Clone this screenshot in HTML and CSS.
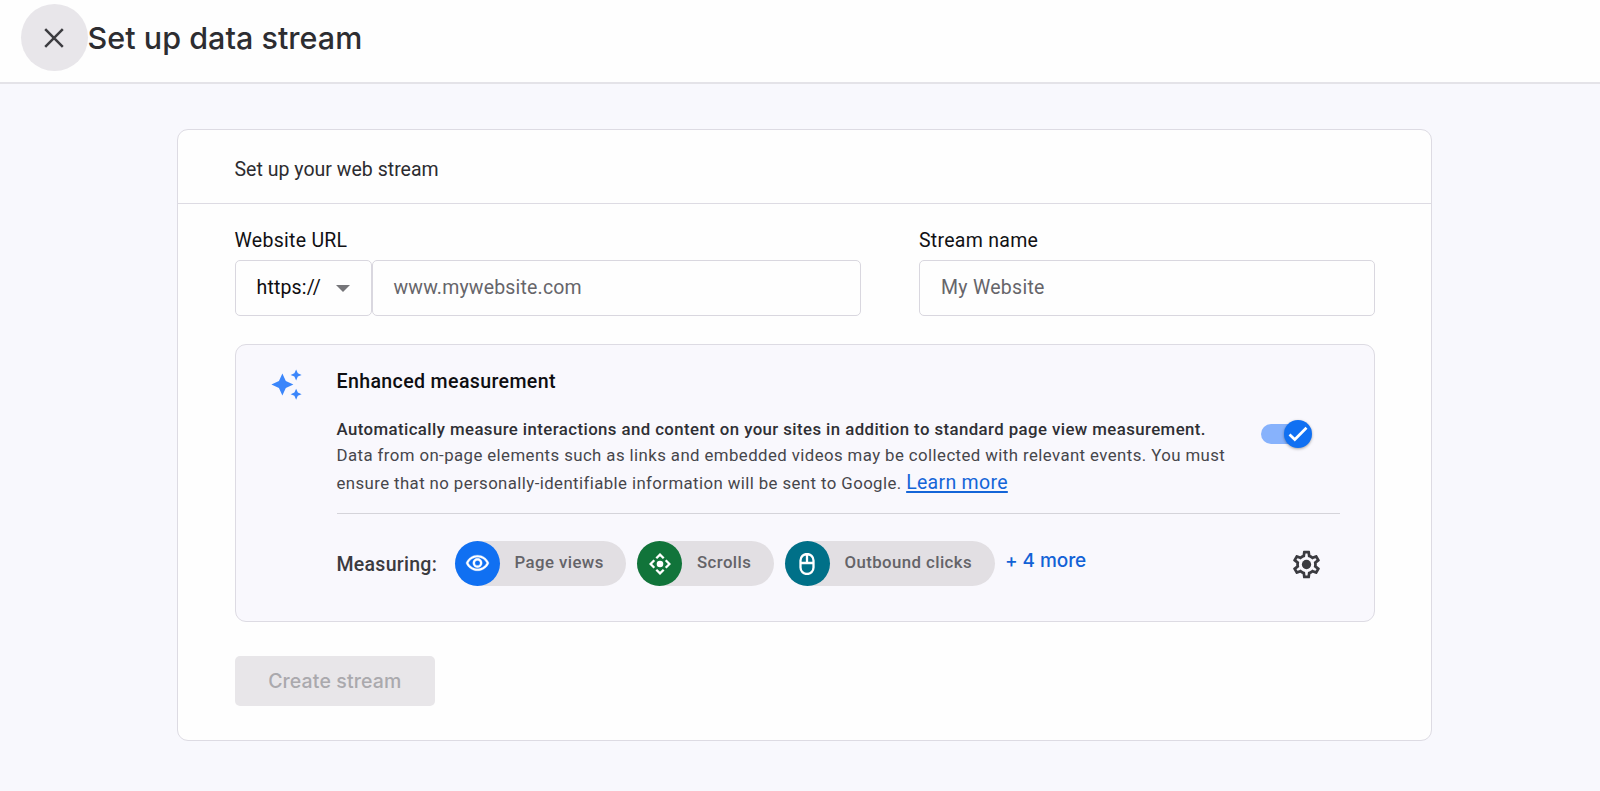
FILE: index.html
```
<!DOCTYPE html>
<html lang="en">
<head>
<meta charset="utf-8">
<title>Set up data stream</title>
<link rel="stylesheet" href="styles.css">
</head>
<body>
<header class="topbar">
  <button class="close" aria-label="Close">
    <svg viewBox="0 0 20 20" width="20" height="20"><path d="M1.2 1.2 18.8 18.8M18.8 1.2 1.2 18.8" fill="none" stroke="#3c3c40" stroke-width="2.5"/></svg>
  </button>
  <h1 class="title">Set up data stream</h1>
</header>
<main class="page">
  <section class="card">
    <div class="card-head">Set up your web stream</div>
    <div class="card-body">
      <div class="fields">
        <div class="field field-url">
          <label class="label">Website URL</label>
          <div class="url-row">
            <div class="box select"><span>https://</span><svg class="caret" viewBox="0 0 14 7" width="14" height="7"><path d="M0 0h14L7 7z" fill="#757579"/></svg></div>
            <div class="box input url">www.mywebsite.com</div>
          </div>
        </div>
        <div class="field field-name">
          <label class="label name-label">Stream name</label>
          <div class="box input name">My Website</div>
        </div>
      </div>
      <section class="enhanced">
        <svg class="sparkle" viewBox="0 0 24 24" width="33" height="33" fill="#3b86fb"><path d="M19 9l1.25-2.75L23 5l-2.75-1.25L19 1l-1.25 2.75L15 5l2.75 1.25L19 9zM11.5 9.5 9 4 6.500 9.500 1 12l5.500 2.500L9 20l2.500-5.500L17 12l-5.500-2.500zM19 15l-1.250 2.750L15 19l2.750 1.250L19 23l1.250-2.750L23 19l-2.750-1.250L19 15z"/></svg>
        <div class="enhanced-main">
          <h2 class="enhanced-title">Enhanced measurement</h2>
          <div class="desc-row">
            <div class="desc">
              <p class="line strong">Automatically measure interactions and content on your sites in addition to standard page view measurement.</p>
              <p class="line">Data from on-page elements such as links and embedded videos may be collected with relevant events. You must</p>
              <p class="line last">ensure that no personally-identifiable information will be sent to Google. <a class="link">Learn more</a></p>
            </div>
            <div class="toggle"><span class="knob"><svg viewBox="0 0 20 16" width="20" height="16"><path d="M1.500 8.500 6.800 13.500 18.500 1.800" fill="none" stroke="#fff" stroke-width="2.700"/></svg></span></div>
          </div>
          <div class="measuring">
            <span class="measuring-label">Measuring:</span>
            <div class="chips">
              <div class="chip views"><span class="dot blue"><svg viewBox="0 0 24 24" width="25" height="25"><path fill="#fff" stroke="#fff" stroke-width=".3" d="M12 6c3.790 0 7.170 2.130 8.820 5.500C19.170 14.870 15.790 17 12 17s-7.170-2.130-8.820-5.500C4.830 8.130 8.210 6 12 6m0-2C7 4 2.730 7.110 1 11.500 2.730 15.890 7 19 12 19s9.270-3.110 11-7.500C21.270 7.110 17 4 12 4zm0 5a2.500 2.500 0 0 1 0 5 2.500 2.500 0 0 1 0-5m0-2c-2.480 0-4.500 2.020-4.500 4.500S9.520 16 12 16s4.500-2.020 4.500-4.500S14.480 7 12 7z"/></svg></span><span class="chip-text">Page views</span></div>
              <div class="chip scrolls"><span class="dot green"><svg viewBox="0 0 22 22" width="22" height="22"><circle cx="11" cy="11" r="3.300" fill="#fff"/><path d="M7.300 5.300 11 1.600l3.700 3.700M16.700 7.300l3.700 3.700-3.700 3.700M14.700 16.700 11 20.400l-3.700-3.700M5.300 14.700 1.600 11l3.700-3.700" fill="none" stroke="#fff" stroke-width="2.300"/></svg></span><span class="chip-text">Scrolls</span></div>
              <div class="chip clicks"><span class="dot teal"><svg viewBox="0 0 16 22" width="16" height="22"><path d="M1.500 7.500a6.500 6.500 0 0 1 13 0v7a6.500 6.500 0 0 1-13 0zM1.500 10h13M8 1v9" fill="none" stroke="#fff" stroke-width="2.300"/></svg></span><span class="chip-text">Outbound clicks</span></div>
            </div>
            <a class="more">+ 4 more</a>
            <svg class="gear" viewBox="0 0 24 24" width="33" height="33" fill="#3b3b40"><path d="M19.430 12.980c.04-.32.07-.64.07-.98 0-.34-.03-.66-.07-.98l2.110-1.650c.19-.15.24-.42.12-.64l-2-3.460c-.09-.16-.26-.25-.44-.25-.06 0-.12.01-.17.03l-2.490 1c-.52-.4-1.080-.73-1.690-.98l-.38-2.650C14.460 2.180 14.250 2 14 2h-4c-.25 0-.46.18-.49.42l-.38 2.650c-.61.25-1.170.59-1.690.98l-2.490-1c-.06-.02-.12-.03-.18-.03-.17 0-.34.09-.43.25l-2 3.460c-.13.22-.07.49.12.64l2.110 1.650c-.04.32-.07.65-.07.98 0 .33.03.66.07.98l-2.110 1.650c-.19.15-.24.42-.12.64l2 3.460c.09.16.26.25.44.25.06 0 .12-.01.17-.03l2.490-1c.52.4 1.080.73 1.690.98l.38 2.650c.03.24.24.42.49.42h4c.25 0 .46-.18.49-.42l.38-2.650c.61-.25 1.170-.59 1.690-.98l2.490 1c.06.02.12.03.18.03.17 0 .34-.09.43-.25l2-3.460c.12-.22.07-.49-.12-.64l-2.110-1.650zm-1.980-1.710c.04.31.05.52.05.73 0 .21-.02.43-.05.73l-.14 1.130.89.7 1.080.84-.7 1.210-1.270-.51-1.040-.42-.9.68c-.43.32-.84.56-1.250.73l-1.060.43-.16 1.130-.2 1.350h-1.400l-.19-1.350-.16-1.130-1.060-.43c-.43-.18-.83-.41-1.230-.71l-.91-.7-1.060.43-1.270.51-.7-1.210 1.080-.84.89-.7-.14-1.130c-.03-.31-.05-.54-.05-.74s.02-.43.05-.73l.14-1.130-.89-.7-1.080-.84.7-1.210 1.270.51 1.040.42.9-.68c.43-.32.84-.56 1.250-.73l1.060-.43.16-1.130.2-1.350h1.390l.19 1.350.16 1.130 1.060.43c.43.18.83.41 1.230.71l.91.7 1.060-.43 1.270-.51.7 1.210-1.070.85-.89.7.14 1.130z"/><circle cx="12" cy="12" r="3.400"/></svg>
          </div>
        </div>
      </section>
      <button class="create" disabled>Create stream</button>
    </div>
  </section>
</main>
</body>
</html>
```
FILE: styles.css
```
* { box-sizing: border-box; }
body { margin: 0; height: 791px; overflow: hidden; background: #f8f8fd; font-family: Roboto, sans-serif; color: #1b1b1f; }
h1, h2, p { margin: 0; font-weight: 400; }
button { border: 0; padding: 0; font-family: inherit; }

.topbar { display: flex; align-items: center; height: 84px; padding: 0 0 7px 20.5px; background: #fefefe; border-bottom: 2px solid #e4e3e8; }
.close { display: flex; align-items: center; justify-content: center; width: 67px; height: 67px; border-radius: 50%; background: #e8e6ea; }
.title { font: 500 30.5px/40px Inter, sans-serif; letter-spacing: .03px; color: #2d2d31; white-space: nowrap; }

.page { padding: 45px 168px 0 177px; }
.card { height: 612px; background: #fefefe; border: 1px solid #dddbe3; border-radius: 11px; }
.card-head { height: 74px; padding: 6px 56.5px 0; border-bottom: 1px solid #dddbe3; font-size: 19.5px; line-height: 68px; letter-spacing: .02px; color: #2c2c30; }
.card-body { padding: 24px 56px 34px 56.5px; }

.fields { display: flex; justify-content: space-between; }
.field-url { width: 626.5px; }
.field-name { width: 456px; }
.label { display: block; height: 24px; margin-bottom: 8px; font-size: 19.5px; line-height: 26px; letter-spacing: .28px; color: #111114; }
.url-row { display: flex; }
.box { display: flex; align-items: center; height: 56px; padding: 0 21px; border: 1px solid #d9d7df; border-radius: 5px; font-size: 19.5px; line-height: 24px; letter-spacing: .15px; }
.select { width: 137px; justify-content: space-between; color: #0d0d10; }
.input { color: #66656a; }
.url { flex: 1; letter-spacing: .18px; }
.name { letter-spacing: .28px; }

.enhanced { display: flex; height: 278px; margin-top: 28px; padding: 23px 34px 0; border: 1px solid #dddbe3; border-radius: 11px; background: #f9f8fd; }
.sparkle { flex: none; margin-right: 34px; }
.enhanced-main { flex: 1; min-width: 0; }
.enhanced-title { margin-top: 2px; font-size: 19.6px; font-weight: 500; line-height: 24px; letter-spacing: .35px; color: #0e0e11; }
.desc-row { display: flex; justify-content: space-between; margin-top: 22px; height: 98px; border-bottom: 1px solid #d5d4da; }
.desc { white-space: nowrap; font-size: 16.8px; letter-spacing: .42px; color: #46464b; }
.line { height: 26px; line-height: 26px; }
.strong { font-weight: 500; color: #2f2f34; }
.last { height: 30px; line-height: 30px; letter-spacing: .41px; }
.link { font-size: 19.5px; letter-spacing: .3px; color: #1465d8; text-decoration: underline; text-decoration-thickness: 1.5px; text-underline-offset: 2px; }
.toggle { flex: none; width: 44px; height: 20px; margin: 7.5px 35px 0 0; border-radius: 10px; background: #87b2fc; }
.knob { display: flex; align-items: center; justify-content: center; width: 28px; height: 28px; margin: -4px 0 0 23px; border-radius: 50%; background: #1070f2; box-shadow: 0 1px 3px rgba(0, 0, 0, .35); }

.measuring { display: flex; align-items: center; height: 45px; margin-top: 27px; white-space: nowrap; }
.measuring-label { width: 118px; font-size: 19.5px; font-weight: 460; letter-spacing: .28px; line-height: 24px; color: #3b3b40; padding-top: 3px; }
.chips { display: flex; gap: 11px; }
.chip { display: flex; align-items: center; height: 45px; border-radius: 23px; background: #e2dfe3; color: #646368; font-size: 16.8px; font-weight: 500; letter-spacing: .42px; }
.chip-text { padding-bottom: 3px; }
.views { width: 171.5px; }
.scrolls { width: 136.5px; }
.clicks { width: 210px; }
.dot { display: flex; align-items: center; justify-content: center; width: 45px; height: 45px; margin-right: 15px; border-radius: 50%; }
.blue { background: #1070f2; }
.green { background: #11743a; }
.teal { background: #007088; }
.more { margin: 0 0 5px 10.5px; font: 500 19px/24px Inter, sans-serif; letter-spacing: -.08px; color: #1262d6; }
.gear { margin: 2px 17.5px 0 auto; }

.create { display: block; width: 200.5px; height: 50px; margin-top: 34px; border-radius: 5px; background: #e8e6e9; color: #aaa9ad; font: 500 19.5px/24px Inter, sans-serif; letter-spacing: .12px; padding-bottom: 1px; }
```
